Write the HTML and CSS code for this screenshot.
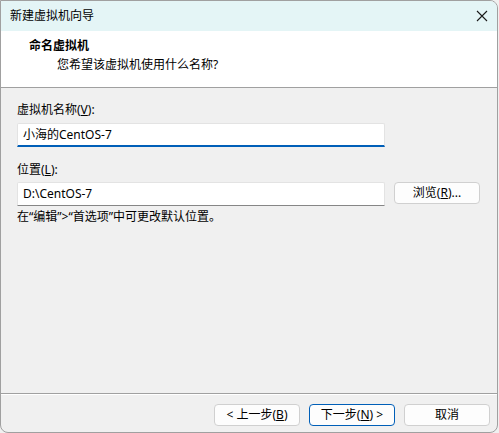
FILE: index.html
```html
<!DOCTYPE html>
<html lang="zh-CN">
<head>
<meta charset="utf-8">
<title>新建虚拟机向导</title>
<link rel="stylesheet" href="styles.css">
</head>
<body>
<div class="window">
  <div class="titlebar">
    <span class="title">新建虚拟机向导</span>
    <svg class="close" width="12" height="12" viewBox="0 0 12 12"><path d="M1 1L11 11M11 1L1 11" stroke="#1a1a1a" stroke-width="1.1" fill="none"/></svg>
  </div>
  <div class="header">
    <div class="h-title">命名虚拟机</div>
    <div class="h-sub">您希望该虚拟机使用什么名称?</div>
  </div>
  <div class="content">
    <div class="label">虚拟机名称(<u>V</u>):</div>
    <div class="input active">小海的CentOS-7</div>
    <div class="label label2">位置(<u>L</u>):</div>
    <div class="row">
      <div class="input">D:\CentOS-7</div>
      <button class="btn browse">浏览(<u>R</u>)...</button>
    </div>
    <div class="note">在“编辑”&gt;“首选项”中可更改默认位置。</div>
  </div>
  <div class="footer">
    <button class="btn">&lt; 上一步(<u>B</u>)</button>
    <button class="btn default">下一步(<u>N</u>) &gt;</button>
    <button class="btn">取消</button>
  </div>
</div>
</body>
</html>
```
FILE: styles.css
```css
html, body {
  margin: 0;
  padding: 0;
  background: #f0f0f0;
}
body {
  width: 499px;
  height: 433px;
  overflow: hidden;
  font-family: "Noto Sans", "Noto Sans CJK SC", sans-serif;
  font-size: 12px;
  color: #000;
}
.window {
  width: 498px;
  height: 433px;
  box-sizing: border-box;
  border: 1px solid #a0a0a0;
  border-radius: 0 8px 8px 8px;
  overflow: hidden;
  display: flex;
  flex-direction: column;
  background: #f0f0f0;
}
.titlebar {
  height: 30px;
  flex: none;
  background: #e4f5f6;
  display: flex;
  align-items: center;
  justify-content: space-between;
  padding: 0 9px 0 9px;
  box-sizing: border-box;
}
.title {
  font-size: 12px;
  line-height: 16px;
  margin-top: -1px;
}
.close {
  margin-right: 0;
}
.header {
  height: 57px;
  flex: none;
  box-sizing: border-box;
  background: #fff;
  border-bottom: 1px solid #a0a0a0;
  padding: 7px 0 0 28px;
}
.h-title {
  font-weight: bold;
  line-height: 16px;
  font-size: 12px;
}
.h-sub {
  line-height: 16px;
  margin: 3px 0 0 28px;
}
.content {
  flex: 1;
  padding: 14px 0 0 16px;
  display: flex;
  flex-direction: column;
}
.label {
  line-height: 16px;
  margin-bottom: 5px;
}
.label2 {
  margin-top: 15px;
  margin-bottom: 4px;
}
u {
  text-decoration: underline;
  text-underline-offset: 1px;
}
.input {
  width: 368px;
  height: 24px;
  box-sizing: border-box;
  background: #fff;
  border: 1px solid #e3e3e3;
  border-bottom: 1px solid #868686;
  padding: 0 5px;
  line-height: 22px;
  border-radius: 2px 2px 0 0;
}
.input.active {
  border-bottom: 2px solid #005fb8;
  line-height: 21px;
}
.row {
  display: flex;
  align-items: flex-start;
  gap: 9px;
}
.btn {
  width: 86px;
  height: 22px;
  box-sizing: border-box;
  background: #fdfdfd;
  border: 1px solid #d0d0d0;
  border-radius: 4px;
  font-family: inherit;
  font-size: 12px;
  color: #000;
  padding: 0;
  line-height: 18px;
}
.browse {
  margin-top: 0;
}
.note {
  line-height: 16px;
  margin-top: 3px;
}
.footer {
  height: 39px;
  flex: none;
  box-sizing: border-box;
  border-top: 1px solid #a0a0a0;
  box-shadow: inset 0 1px 0 #fff;
  display: flex;
  justify-content: flex-end;
  gap: 9px;
  padding: 10px 7px 0 0;
}
.btn.default {
  border-color: #005fb8;
}
```
